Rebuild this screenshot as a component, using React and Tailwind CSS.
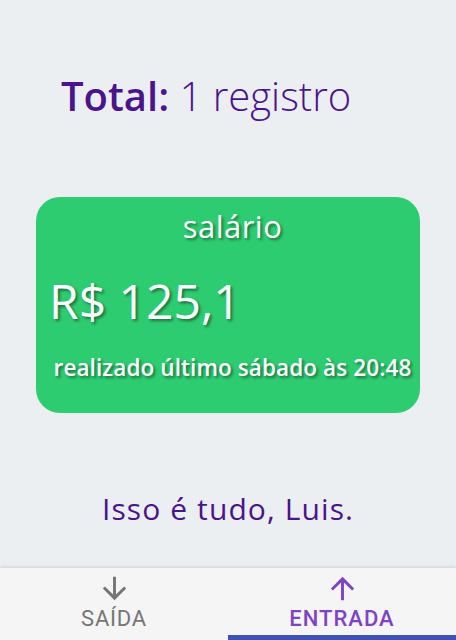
import React from "react";

const ArrowDown = ({ className }) => (
  <svg viewBox="0 0 24 24" className={className} fill="currentColor">
    <path d="M20 12l-1.41-1.41L13 16.17V4h-2v12.17l-5.58-5.59L4 12l8 8 8-8z" />
  </svg>
);
const ArrowUp = ({ className }) => (
  <svg viewBox="0 0 24 24" className={className} fill="currentColor">
    <path d="M4 12l1.41 1.41L11 7.83V20h2V7.83l5.58 5.59L20 12l-8-8-8 8z" />
  </svg>
);

export default function App() {
  const shadow = "[text-shadow:2px_2px_3px_rgba(0,0,0,0.45)]";
  return (
    <div className="h-[640px] w-[456px] bg-[#eceff1] flex flex-col font-['Open_Sans',sans-serif] overflow-hidden">
      <div className="flex-1 flex flex-col">
        <div className="pl-[61px] pt-[76px] text-[40px] leading-[40px] text-[#4a148c] whitespace-nowrap">
          <span className="font-semibold">Total:</span>{" "}
          <span className="font-light">1 registro</span>
        </div>
        <div className="mt-[81px] mx-[36px] h-[216px] rounded-[24px] bg-[#2ecc71] text-white flex flex-col pl-[13px] pr-[4px]">
          <div className={`text-center text-[31px] leading-[31px] pt-[14px] tracking-[0.5px] ${shadow}`}>salário</div>
          <div className={`mt-[35px] text-[48px] leading-[48px] ${shadow}`}>R$ 125,1</div>
          <div className={`mt-[31px] text-[22.5px] leading-[23px] font-semibold text-center whitespace-nowrap tracking-[0.1px] ${shadow}`}>
            realizado último sábado às 20:48
          </div>
        </div>
        <div className="mt-[81px] text-center text-[30px] leading-[30px] font-medium text-[#4a148c] tracking-[1.1px]">
          Isso é tudo, Luis.
        </div>
      </div>
      <div className="h-[72px] bg-[#f5f5f5] shadow-[0_-1px_4px_rgba(0,0,0,0.12)] flex font-['Roboto',sans-serif] relative z-10">
        <div className="flex-1 flex flex-col items-center pt-[3px] text-[#757575]">
          <ArrowDown className="w-[35px] h-[35px]" />
          <div className="text-[22px] leading-[22px] tracking-[0.8px] mt-[2px]">SAÍDA</div>
        </div>
        <div className="flex-1 flex flex-col items-center pt-[3px] text-[#7e44c4] relative">
          <ArrowUp className="w-[35px] h-[35px]" />
          <div className="text-[22px] leading-[22px] tracking-[1px] font-medium mt-[2px]">ENTRADA</div>
          <div className="absolute bottom-0 left-0 right-0 h-[5px] bg-[#3f51b5]" />
        </div>
      </div>
    </div>
  );
}
